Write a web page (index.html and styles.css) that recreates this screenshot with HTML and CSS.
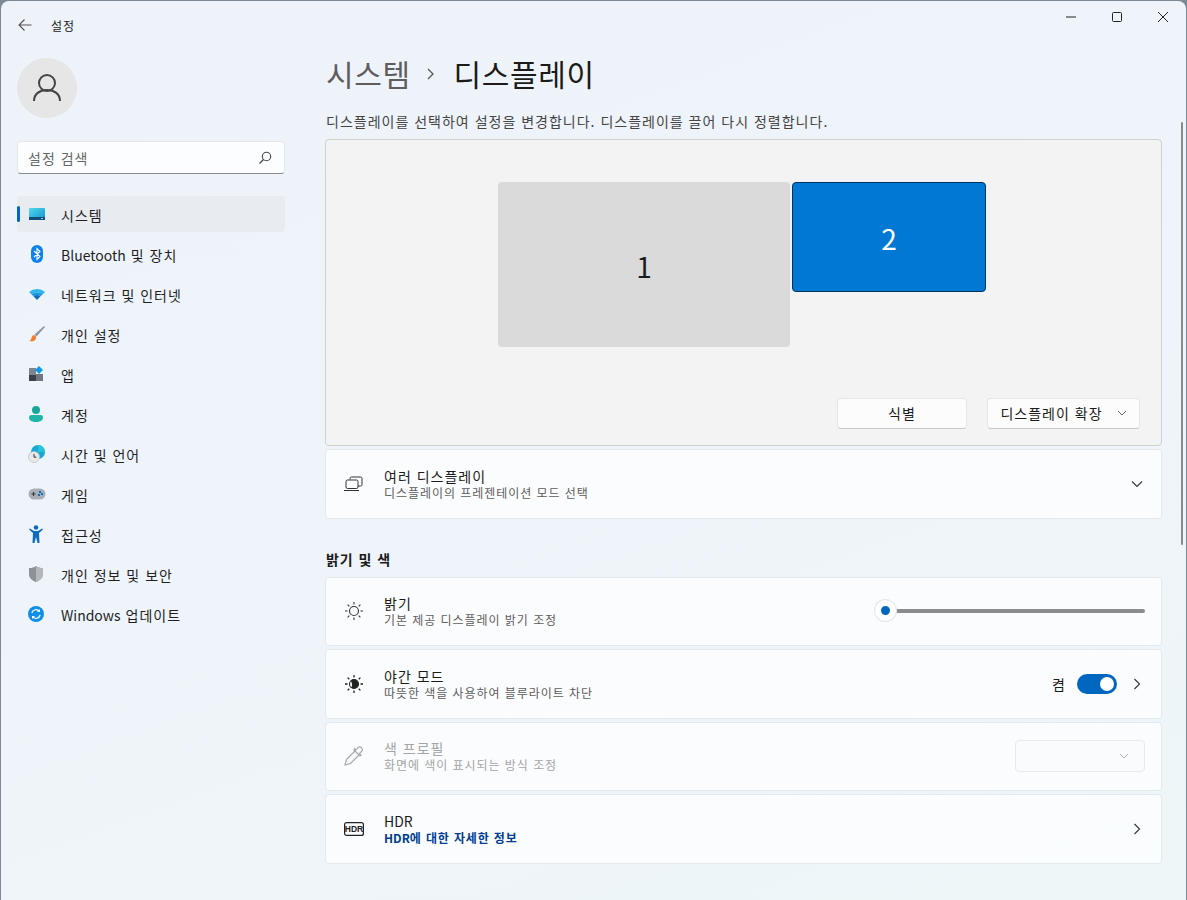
FILE: index.html
```html
<!DOCTYPE html>
<html lang="ko">
<head>
    <meta charset="UTF-8">
    <title>설정</title>
    <link rel="stylesheet" href="styles.css">
</head>
<body>
<div class="window">
    <!-- 왼쪽 메뉴 -->
    <aside class="sidebar">
        <div class="app-title">
            <svg class="back" width="16" height="16" viewBox="0 0 16 16"><path d="M14.500 8H2M7.500 2.500 2 8l5.500 5.500" fill="none" stroke="#555" stroke-width="1.100"/></svg>
            <span>설정</span>
        </div>
        <div class="profile">
            <div class="avatar">
                <svg width="30" height="32" viewBox="0 0 30 32"><circle cx="15" cy="11" r="8" fill="none" stroke="#444" stroke-width="2"/><path d="M2 29c0-7 5.500-11 13-11s13 4 13 11" fill="none" stroke="#444" stroke-width="2"/></svg>
            </div>
        </div>
        <div class="search">
            <span>설정 검색</span>
            <svg width="14" height="14" viewBox="0 0 14 14"><circle cx="8.500" cy="5.500" r="4.200" fill="none" stroke="#444" stroke-width="1.100"/><path d="M5.500 8.500 1.500 12.500" stroke="#444" stroke-width="1.200"/></svg>
        </div>
        <ul class="nav">
            <li class="active">
                <svg class="nav-icon" width="18" height="14" viewBox="0 0 18 14"><defs><linearGradient id="sys" x1="0" y1="0" x2="1" y2="1"><stop offset="0" stop-color="#4fd8ee"/><stop offset="1" stop-color="#1593d0"/></linearGradient></defs><rect width="16" height="12" x="1" y="1" rx="1" fill="url(#sys)"/><rect width="16" height="3" x="1" y="10" fill="#0f4f78"/><rect width="2" height="1" x="13" y="11" fill="#8fd0ea"/></svg>
                <span class="nav-label">시스템</span>
            </li>
            <li>
                <svg class="nav-icon" width="18" height="18" viewBox="0 0 18 18"><rect x="3" y="0" width="12" height="18" rx="6" fill="#0f80ee"/><path d="M6 6l6 5.500-3 3v-11l3 3-6 5.500" fill="none" stroke="#fff" stroke-width="1.100"/></svg>
                <span class="nav-label"><span class="latin">Bluetooth</span> 및 장치</span>
            </li>
            <li>
                <svg class="nav-icon" width="18" height="12" viewBox="0 0 18 12"><path d="M1 4a12 12 0 0 1 16 0l-2.300 2.200a9 9 0 0 0-11.400 0z" fill="#2fb4ec"/><path d="M3.300 6.200a9 9 0 0 1 11.400 0L12.500 8.300a6 6 0 0 0-7 0z" fill="#1a9ae0"/><path d="M5.500 8.300a6 6 0 0 1 7 0L9 12z" fill="#0b6cc0"/></svg>
                <span class="nav-label">네트워크 및 인터넷</span>
            </li>
            <li>
                <svg class="nav-icon" width="18" height="18" viewBox="0 0 18 18"><path d="M16 1 17 2 8.500 11.500 6.500 9.500z" fill="#8f96a0"/><path d="M6.200 10c-2.500.3-2.500 3-3.200 4.500-.4.800-1.500 1-1.500 1.500 3 .7 7 0 6.500-4.200z" fill="#ee7d2e"/></svg>
                <span class="nav-label">개인 설정</span>
            </li>
            <li>
                <svg class="nav-icon" width="16" height="16" viewBox="0 0 16 16"><rect x="1" y="2" width="7" height="7" fill="#7c858f"/><rect x="1" y="9" width="7" height="6" fill="#3c4048"/><rect x="8" y="8" width="7" height="7" fill="#6f7780"/><path d="M11 0l4 4-4 4-4-4z" fill="#0f9ae8"/></svg>
                <span class="nav-label">앱</span>
            </li>
            <li>
                <svg class="nav-icon" width="16" height="17" viewBox="0 0 16 17"><circle cx="8" cy="4.500" r="4" fill="#17a79a"/><path d="M1 12a2.500 2.500 0 0 1 2.500-2.500h9A2.500 2.500 0 0 1 15 12c0 3-3 4.500-7 4.500S1 15 1 12z" fill="#1fb5a6"/></svg>
                <span class="nav-label">계정</span>
            </li>
            <li>
                <svg class="nav-icon" width="18" height="18" viewBox="0 0 18 18"><circle cx="10" cy="7" r="7" fill="#1ba7cf"/><path d="M10 0a7 7 0 0 1 7 7h-7z" fill="#27c3dd"/><circle cx="6" cy="12" r="5.500" fill="#e9e9e9" stroke="#b9bdc2" stroke-width=".7"/><path d="M6 9v3.200h2.400" fill="none" stroke="#333" stroke-width="1"/></svg>
                <span class="nav-label">시간 및 언어</span>
            </li>
            <li>
                <svg class="nav-icon" width="18" height="12" viewBox="0 0 18 12"><rect x=".5" y=".5" width="17" height="11" rx="5.500" fill="#a9afb6"/><path d="M3.500 6h4M5.500 4v4" stroke="#333" stroke-width="1"/><rect x="11" y="3" width="2" height="2" fill="#0f6cc0"/><rect x="13" y="5" width="2" height="2" fill="#0f6cc0"/><rect x="10" y="6" width="2" height="2" fill="#0f6cc0"/></svg>
                <span class="nav-label">게임</span>
            </li>
            <li>
                <svg class="nav-icon" width="16" height="18" viewBox="0 0 16 18"><circle cx="8" cy="2.500" r="2.300" fill="#0f6cbd"/><path d="M1 4.500l.8-1L6 6h4l4.200-2.500.8 1L11 8l.5 10h-2L8 12l-1.500 6h-2L5 8z" fill="#0f6cbd"/></svg>
                <span class="nav-label">접근성</span>
            </li>
            <li>
                <svg class="nav-icon" width="16" height="18" viewBox="0 0 16 18"><path d="M8 1c2 1.500 4 2 7 2v6c0 4-3 6.500-7 8-4-1.500-7-4-7-8V3c3 0 5-.5 7-2z" fill="#8d9298"/><path d="M8 1c2 1.500 4 2 7 2v6c0 4-3 6.500-7 8z" fill="#b4b8bd"/></svg>
                <span class="nav-label">개인 정보 및 보안</span>
            </li>
            <li>
                <svg class="nav-icon" width="16" height="16" viewBox="0 0 16 16"><circle cx="8" cy="8" r="8" fill="#0f8fe6"/><path d="M3.800 7A4.300 4.300 0 0 1 11.500 5.500M12.200 9a4.300 4.300 0 0 1-7.700 1.500" fill="none" stroke="#fff" stroke-width="1.200"/><path d="M12 3v3H9zM4 13v-3h3z" fill="#fff"/></svg>
                <span class="nav-label"><span class="latin">Windows</span> 업데이트</span>
            </li>
        </ul>
    </aside>

    <!-- 오른쪽 내용 -->
    <main class="content">
        <div class="caption-buttons">
            <svg width="10" height="10" viewBox="0 0 10 10"><path d="M0 5h10" stroke="#222" stroke-width="1"/></svg>
            <svg width="10" height="10" viewBox="0 0 10 10"><rect x=".5" y=".5" width="9" height="9" rx="1" fill="none" stroke="#222" stroke-width="1"/></svg>
            <svg width="10" height="10" viewBox="0 0 10 10"><path d="M0 0l10 10M10 0 0 10" stroke="#222" stroke-width="1"/></svg>
        </div>
        <h1 class="page-title"><span class="crumb">시스템</span><svg class="crumb-sep" width="10" height="14" viewBox="0 0 10 14"><path d="M2 2l5 5-5 5" fill="none" stroke="#555" stroke-width="1.300"/></svg><span>디스플레이</span></h1>
        <p class="page-desc">디스플레이를 선택하여 설정을 변경합니다. 디스플레이를 끌어 다시 정렬합니다.</p>

        <section class="display-panel">
            <div class="monitor monitor-one">1</div>
            <div class="monitor monitor-two">2</div>
            <div class="panel-actions">
                <button class="btn btn-identify">식별</button>
                <button class="btn btn-extend">디스플레이 확장
                    <svg width="10" height="6" viewBox="0 0 10 6"><path d="M1 1l4 4 4-4" fill="none" stroke="#666" stroke-width="1"/></svg>
                </button>
            </div>
        </section>

        <div class="card card-first">
            <svg class="card-icon" width="20" height="16" viewBox="0 0 20 16"><path d="M6 3.500V2.500a1.500 1.500 0 0 1 1.500-1.500h9A1.500 1.500 0 0 1 18 2.500v6A1.500 1.500 0 0 1 16.500 10H14" fill="none" stroke="#333"/><rect x="2" y="4" width="12" height="8.500" rx="1.500" fill="none" stroke="#333"/><path d="M0 14.500h15" stroke="#333"/></svg>
            <div class="card-text">
                <div class="card-title">여러 디스플레이</div>
                <div class="card-sub">디스플레이의 프레젠테이션 모드 선택</div>
            </div>
            <svg class="chev" width="12" height="8" viewBox="0 0 12 8"><path d="M1 1.500l5 5 5-5" fill="none" stroke="#333" stroke-width="1.100"/></svg>
        </div>

        <h2 class="section-title">밝기 및 색</h2>

        <div class="card-list">
            <div class="card">
                <svg class="card-icon" width="20" height="20" viewBox="0 0 20 20"><circle cx="10" cy="10" r="4.500" fill="none" stroke="#333" stroke-width="1.100"/><path d="M10 1v2.500M10 16.500V19M1 10h2.500M16.500 10H19M3.600 3.600l1.700 1.700M14.700 14.700l1.700 1.700M3.600 16.400l1.700-1.700M14.700 5.300l1.700-1.700" stroke="#333" stroke-width="1.100"/></svg>
                <div class="card-text">
                    <div class="card-title">밝기</div>
                    <div class="card-sub">기본 제공 디스플레이 밝기 조정</div>
                </div>
                <div class="slider">
                    <div class="slider-track"></div>
                    <div class="slider-thumb"></div>
                </div>
            </div>
            <div class="card">
                <svg class="card-icon" width="20" height="20" viewBox="0 0 20 20"><circle cx="10" cy="10" r="4.500" fill="none" stroke="#222" stroke-width="1.100"/><path d="M6.800 6.800a4.500 4.500 0 0 1 6.400 0 4.500 4.500 0 0 1 0 6.400 4.500 4.500 0 0 1-6.400 0c2.500-.5 1-4.500 0-6.400z" fill="#222"/><path d="M10 1v2.500M10 16.500V19M1 10h2.500M16.500 10H19M3.600 3.600l1.700 1.700M14.700 14.700l1.700 1.700M3.600 16.400l1.700-1.700M14.700 5.300l1.700-1.700" stroke="#222" stroke-width="1.300"/></svg>
                <div class="card-text">
                    <div class="card-title">야간 모드</div>
                    <div class="card-sub">따뜻한 색을 사용하여 블루라이트 차단</div>
                </div>
                <span class="toggle-label">켬</span>
                <div class="toggle"></div>
                <svg class="chev chev-right" width="8" height="12" viewBox="0 0 8 12"><path d="M1.500 1l5 5-5 5" fill="none" stroke="#333" stroke-width="1.100"/></svg>
            </div>
            <div class="card card-disabled">
                <svg class="card-icon" width="20" height="20" viewBox="0 0 20 20"><path d="M11 5 2.500 13.500 1 19l5.500-1.500L15 9" fill="none" stroke="#a8a8a8" stroke-width="1.200"/><path d="M10 4l6 6 1-1-1.500-1.500 2-2a2.600 2.600 0 0 0-3.700-3.700l-2 2L10.500 2.500z" fill="none" stroke="#a8a8a8" stroke-width="1.200"/></svg>
                <div class="card-text">
                    <div class="card-title">색 프로필</div>
                    <div class="card-sub">화면에 색이 표시되는 방식 조정</div>
                </div>
                <div class="select-off">
                    <svg width="10" height="6" viewBox="0 0 10 6"><path d="M1 1l4 4 4-4" fill="none" stroke="#aaa" stroke-width="1"/></svg>
                </div>
            </div>
            <div class="card">
                <svg class="card-icon" width="20" height="14" viewBox="0 0 20 14"><rect x=".6" y=".6" width="18.800" height="12.800" rx="2" fill="none" stroke="#222" stroke-width="1.200"/><text x="10" y="10" class="hdr-mark" text-anchor="middle">HDR</text></svg>
                <div class="card-text">
                    <div class="card-title"><span class="latin">HDR</span></div>
                    <a class="card-link" href="#"><span class="latin">HDR</span>에 대한 자세한 정보</a>
                </div>
                <svg class="chev chev-right" width="8" height="12" viewBox="0 0 8 12"><path d="M1.500 1l5 5-5 5" fill="none" stroke="#333" stroke-width="1.100"/></svg>
            </div>
        </div>
        <div class="scroll-thumb"></div>
    </main>
</div>
</body>
</html>
```

FILE: styles.css
```css
html,body{
    width: 100%;
    height: 100%;
    margin: 0;
    padding: 0;
    overflow: hidden;
    background-color: #7d8a96;
    font-family: "Noto Sans CJK KR","Noto Sans",sans-serif;
    color: #1b1b1b;
}
ul,li{
    list-style: none;
    margin: 0;
    padding: 0;
}
.latin{
    letter-spacing: 0;
}
.window{
    display: flex;
    width: 1185px;
    height: 899px;
    margin: 1px 0 0 1px;
    border-radius: 8px 8px 0 0;
    overflow: hidden;
    background: linear-gradient(160deg,#eef3f9 0%,#eff4fa 55%,#eef6f8 100%);
}

/* sidebar */
.sidebar{
    flex: none;
    width: 324px;
    padding: 0 40px 0 16px;
    box-sizing: border-box;
}
.app-title{
    display: flex;
    align-items: center;
    height: 48px;
    font-size: 12px;
    letter-spacing: 1px;
}
.app-title .back{
    margin-right: 18px;
}
.profile{
    height: 60px;
    margin-top: 9px;
}
.avatar{
    display: flex;
    align-items: center;
    justify-content: center;
    width: 60px;
    height: 60px;
    border-radius: 50%;
    background-color: #e6e6e6;
}
.search{
    display: flex;
    align-items: center;
    justify-content: space-between;
    height: 31px;
    margin-top: 23px;
    padding: 0 12px 0 10px;
    background-color: #fcfdfe;
    border: 1px solid #e4e7ea;
    border-bottom-color: #8a8d90;
    border-radius: 4px;
    font-size: 14px;
    letter-spacing: 1px;
    color: #666;
}
.nav{
    margin-top: 22px;
}
.nav li{
    position: relative;
    display: flex;
    align-items: center;
    height: 36px;
    margin-bottom: 4px;
    border-radius: 4px;
    font-size: 14px;
    letter-spacing: 1px;
    color: #1f1f1f;
}
.nav li.active{
    background-color: #e8ecf1;
}
.nav li.active::before{
    content: "";
    position: absolute;
    left: 0;
    top: 10px;
    width: 3px;
    height: 16px;
    border-radius: 2px;
    background-color: #0067c0;
}
.nav-icon{
    position: absolute;
    left: 11px;
    top: 50%;
    transform: translateY(-50%);
}
.nav-label{
    margin-left: 44px;
    padding-top: 1px;
}

/* content */
.content{
    position: relative;
    flex: 1;
    min-width: 0;
    padding: 0 24px 0 0;
}
.caption-buttons{
    position: absolute;
    top: 11px;
    right: 18px;
    display: flex;
    gap: 36px;
}
.page-title{
    display: flex;
    align-items: center;
    height: 44px;
    margin: 50px 0 0 1px;
    font-size: 30px;
    font-weight: 400;
    line-height: 44px;
    letter-spacing: .6px;
}
.crumb{
    color: #5d5d5d;
}
.crumb-sep{
    margin: 2px 18px 0 15px;
}
.page-desc{
    margin: 16px 0 0 1px;
    font-size: 14px;
    line-height: 20px;
    letter-spacing: 1px;
    color: #444;
}
.display-panel{
    position: relative;
    height: 305px;
    margin-top: 8px;
    background-color: #f3f3f3;
    border: 1px solid #cfd0d0;
    border-radius: 4px;
}
.monitor{
    position: absolute;
    display: flex;
    align-items: center;
    justify-content: center;
    box-sizing: border-box;
    padding-top: 2px;
    border-radius: 4px;
    font-size: 28px;
}
.monitor-one{
    left: 172px;
    top: 42px;
    width: 292px;
    height: 165px;
    background-color: #dadada;
}
.monitor-two{
    left: 466px;
    top: 42px;
    width: 194px;
    height: 110px;
    background-color: #0078d4;
    border: 1px solid #00335c;
    color: #fff;
}
.panel-actions{
    position: absolute;
    right: 21px;
    top: 258px;
    display: flex;
    gap: 20px;
}
.btn{
    display: flex;
    align-items: center;
    justify-content: center;
    height: 31px;
    padding: 0 0 2px;
    background-color: #fcfcfc;
    border: 1px solid #e6e6e6;
    border-bottom-color: #c8c8c8;
    border-radius: 4px;
    font-family: inherit;
    font-size: 14px;
    letter-spacing: 1px;
    color: #1b1b1b;
}
.btn-identify{
    width: 130px;
}
.btn-extend{
    width: 153px;
    gap: 14px;
}
.card{
    display: flex;
    align-items: center;
    box-sizing: border-box;
    height: 69.5px;
    padding: 0 16px 0 0;
    background-color: rgba(255,255,255,.72);
    border: 1px solid #e4e9ee;
    border-radius: 4px;
}
.card-first{
    margin-top: 3px;
}
.card-icon{
    flex: none;
    width: 20px;
    margin: 0 20px 0 18px;
}
.card-text{
    flex: 1;
    min-width: 0;
    padding-top: 1px;
}
.card-title{
    font-size: 14px;
    line-height: 17px;
    letter-spacing: 1px;
    color: #1b1b1b;
}
.card-sub{
    font-size: 12px;
    line-height: 16px;
    letter-spacing: .95px;
    color: #5d5d5d;
}
.card-link{
    display: block;
    font-size: 12px;
    font-weight: 700;
    line-height: 16px;
    letter-spacing: .85px;
    color: #003e92;
    text-decoration: none;
}
.chev{
    flex: none;
    margin-right: 2px;
}
.chev-right{
    margin-left: 16px;
    margin-right: 4px;
}
.section-title{
    margin: 30px 0 8px 1px;
    font-size: 14px;
    font-weight: 700;
    line-height: 20px;
    letter-spacing: .95px;
}
.card-list{
    display: flex;
    flex-direction: column;
    gap: 3px;
}
.slider{
    position: relative;
    flex: none;
    width: 270px;
    height: 22px;
}
.slider-track{
    position: absolute;
    left: 10px;
    right: 0;
    top: 9px;
    height: 4px;
    border-radius: 2px;
    background-color: #8a8c8e;
}
.slider-thumb{
    position: absolute;
    left: 0;
    top: 0;
    box-sizing: border-box;
    width: 21px;
    height: 21px;
    border: 6px solid #fff;
    border-radius: 50%;
    background-color: #0067c0;
    box-shadow: 0 0 0 1px #e5e8ea;
}
.toggle-label{
    margin-right: 12px;
    font-size: 14px;
}
.toggle{
    position: relative;
    flex: none;
    width: 40px;
    height: 20px;
    border-radius: 10px;
    background-color: #0067c0;
}
.toggle::after{
    content: "";
    position: absolute;
    right: 3px;
    top: 3px;
    width: 14px;
    height: 14px;
    border-radius: 50%;
    background-color: #fff;
}
.card-disabled .card-title,
.card-disabled .card-sub{
    color: #a3a5a7;
}
.select-off{
    display: flex;
    align-items: center;
    justify-content: flex-end;
    box-sizing: border-box;
    width: 130px;
    height: 32px;
    padding-right: 15px;
    background-color: #fafbfc;
    border: 1px solid #e8eaec;
    border-radius: 4px;
}
.hdr-mark{
    font-family: "Liberation Sans",sans-serif;
    font-size: 8.500px;
    font-weight: 700;
    fill: #222;
}
.scroll-thumb{
    position: absolute;
    right: 3px;
    top: 121px;
    width: 2px;
    height: 423px;
    border-radius: 1px;
    background-color: #8a8a8a;
}
```
